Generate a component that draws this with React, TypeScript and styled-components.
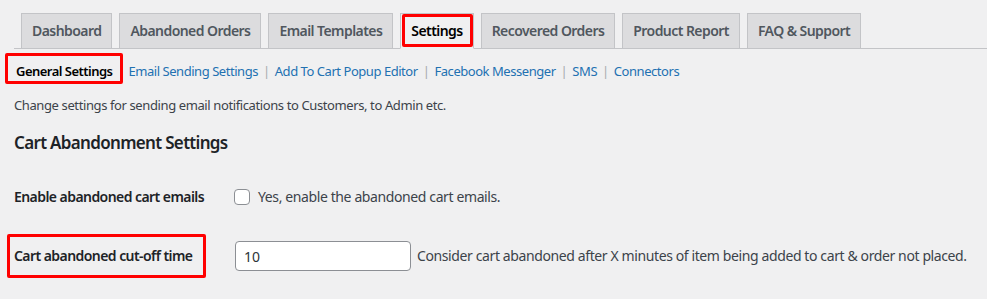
import React from "react";
import styled, { createGlobalStyle, css } from "styled-components";

const GlobalStyle = createGlobalStyle`
  html, body {
    margin: 0;
    padding: 0;
    background: #f0f0f1;
  }
  body {
    font-family: "Noto Sans", "Open Sans", sans-serif;
    color: #3c434a;
    font-size: 13px;
    letter-spacing: -0.03em;
  }
`;

// red annotation box drawn over an element
const redBox = css`
  &::after {
    content: "";
    position: absolute;
    border: 3px solid #f00;
    border-radius: 2px;
    pointer-events: none;
  }
`;

const Page = styled.div`
  padding: 13px 0 0 14px;
  width: 973px;
  height: 286px;
  overflow: hidden;
`;

const TabBar = styled.nav`
  display: flex;
  border-bottom: 1px solid #c3c4c7;
  padding-left: 7px;
  gap: 7px;
`;

const Tab = styled.a<{ $active?: boolean }>`
  position: relative;
  display: block;
  margin-bottom: -1px;
  padding: 5px 10px;
  border: 1px solid #c3c4c7;
  background: ${(p) => (p.$active ? "#f0f0f1" : "#dcdcde")};
  border-bottom-color: ${(p) => (p.$active ? "#f0f0f1" : "#c3c4c7")};
  color: ${(p) => (p.$active ? "#000" : "#50575e")};
  font-size: 14px;
  font-weight: 600;
  line-height: 24px;
  letter-spacing: -0.04em;
  white-space: nowrap;
  text-decoration: none;

  ${(p) =>
    p.$active &&
    css`
      ${redBox}
      &::after {
        top: 0;
        left: 1px;
        right: 0;
        bottom: 1px;
      }
    `}
`;

const SubNav = styled.ul`
  display: flex;
  align-items: center;
  margin: 13px 0 0 2px;
  padding: 0;
  list-style: none;
  line-height: 18px;
  font-size: 13px;
`;

const SubItem = styled.li`
  display: flex;
  align-items: center;
`;

const SubLink = styled.a<{ $current?: boolean }>`
  position: relative;
  color: ${(p) => (p.$current ? "#000" : "#2271b1")};
  font-weight: ${(p) => (p.$current ? 600 : 400)};
  letter-spacing: ${(p) => (p.$current ? "-0.04em" : "-0.035em")};
  text-decoration: none;
  white-space: nowrap;
  margin-right: ${(p) => (p.$current ? "16px" : "0")};

  ${(p) =>
    p.$current &&
    css`
      ${redBox}
      &::after {
        top: -9px;
        left: -11px;
        right: -10px;
        bottom: -4px;
      }
    `}
`;

const Sep = styled.span`
  color: #a7aaad;
  margin: 0 5px;
`;

const Description = styled.p`
  margin: 16px 0 0;
  line-height: 18px;
  font-size: 13px;
  color: #3c434a;
`;

const Heading = styled.h2`
  margin: 17px 0 0;
  font-size: 17px;
  line-height: 24px;
  font-weight: 600;
  letter-spacing: -0.04em;
  color: #1d2327;
`;

const Row = styled.div<{ $top: number }>`
  display: flex;
  align-items: center;
  margin-top: ${(p) => p.$top}px;
`;

const Label = styled.label<{ $marked?: boolean }>`
  position: relative;
  width: 220px;
  flex-shrink: 0;
  font-size: 14px;
  font-weight: 600;
  line-height: 20px;
  letter-spacing: -0.04em;
  color: #1d2327;

  ${(p) =>
    p.$marked &&
    css`
      ${redBox}
      &::after {
        top: -12px;
        left: -7px;
        width: 193px;
        bottom: -12px;
      }
    `}
`;

const Checkbox = styled.input.attrs({ type: "checkbox" })`
  appearance: none;
  box-sizing: border-box;
  width: 16px;
  height: 16px;
  margin: 0 8px 0 0;
  border: 1px solid #8c8f94;
  border-radius: 4px;
  background: #fff;
`;

const FieldText = styled.span`
  font-size: 14px;
  line-height: 20px;
  color: #3c434a;
  white-space: nowrap;
`;

const NumberInput = styled.input`
  box-sizing: border-box;
  width: 176px;
  height: 30px;
  margin: 0 6px 0 1px;
  padding: 0 8px;
  border: 1px solid #8c8f94;
  border-radius: 4px;
  background: #fff;
  font-family: inherit;
  font-size: 14px;
  color: #2c3338;
  outline: none;
`;

const tabs = [
  "Dashboard",
  "Abandoned Orders",
  "Email Templates",
  "Settings",
  "Recovered Orders",
  "Product Report",
  "FAQ & Support",
];

const subLinks = [
  "Email Sending Settings",
  "Add To Cart Popup Editor",
  "Facebook Messenger",
  "SMS",
  "Connectors",
];

export default function App() {
  return (
    <>
      <GlobalStyle />
      <Page>
        <TabBar>
          {tabs.map((t) => (
            <Tab key={t} $active={t === "Settings"}>
              {t}
            </Tab>
          ))}
        </TabBar>

        <SubNav>
          <SubItem>
            <SubLink $current>General Settings</SubLink>
          </SubItem>
          {subLinks.map((l, i) => (
            <SubItem key={l}>
              <SubLink>{l}</SubLink>
              {i < subLinks.length - 1 && <Sep>|</Sep>}
            </SubItem>
          ))}
        </SubNav>

        <Description>
          Change settings for sending email notifications to Customers, to Admin etc.
        </Description>

        <Heading>Cart Abandonment Settings</Heading>

        <Row $top={32}>
          <Label>Enable abandoned cart emails</Label>
          <Checkbox />
          <FieldText>Yes, enable the abandoned cart emails.</FieldText>
        </Row>

        <Row $top={34}>
          <Label $marked>Cart abandoned cut-off time</Label>
          <NumberInput defaultValue="10" />
          <FieldText>
            Consider cart abandoned after X minutes of item being added to cart &amp; order not placed.
          </FieldText>
        </Row>
      </Page>
    </>
  );
}
